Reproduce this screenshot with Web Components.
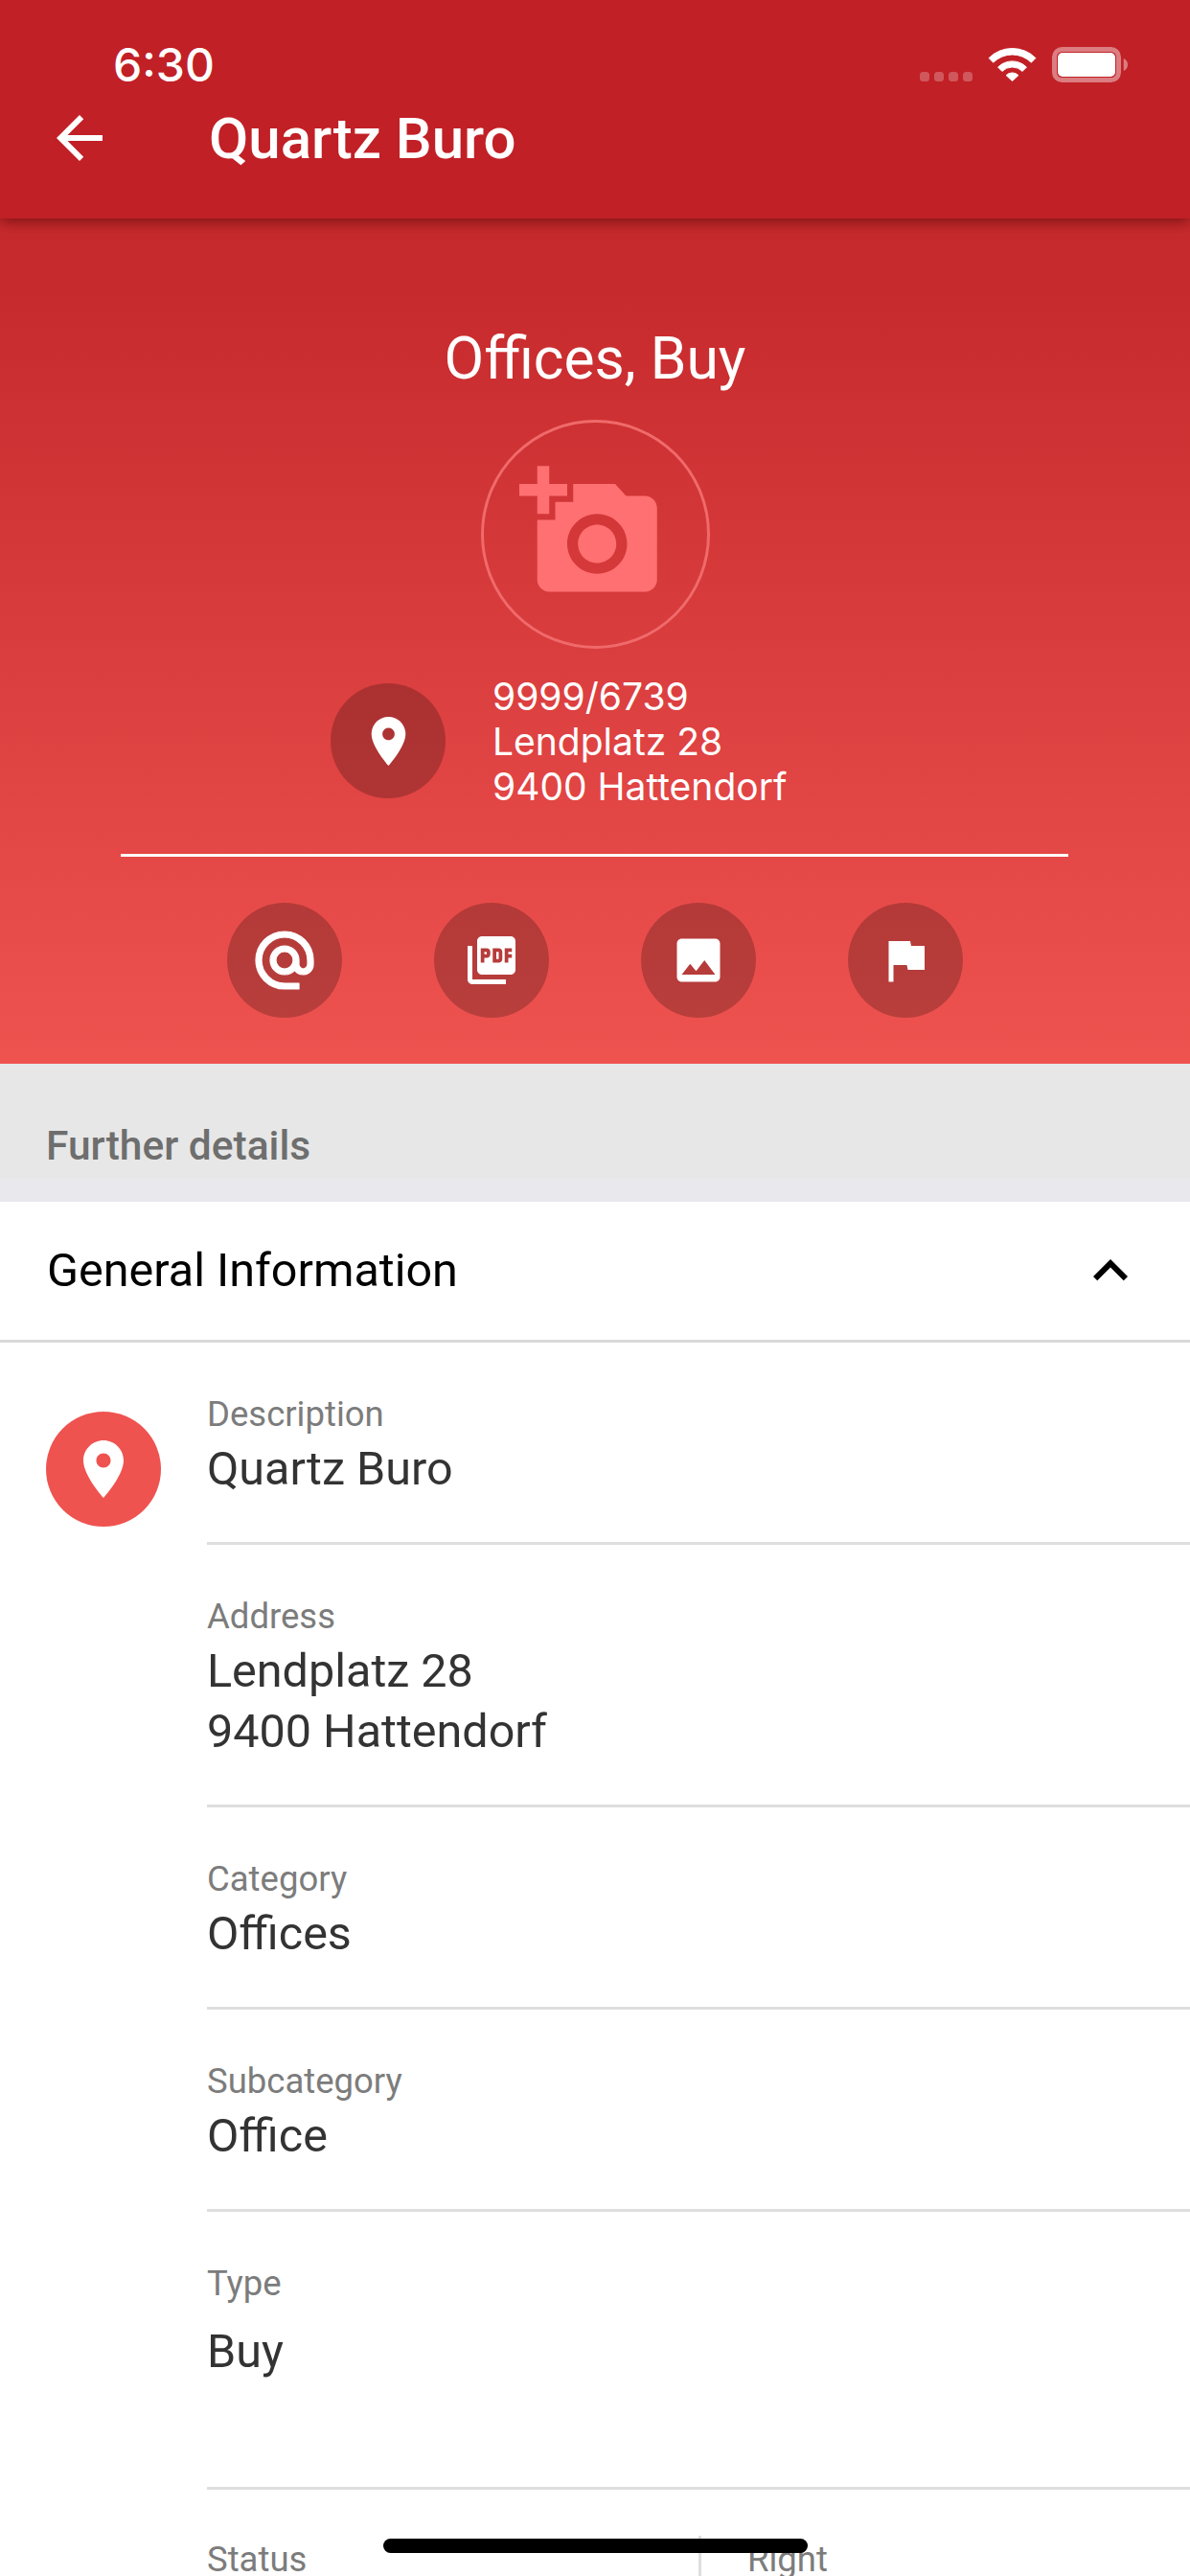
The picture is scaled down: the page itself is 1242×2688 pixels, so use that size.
<!DOCTYPE html>
<html>
<head>
<meta charset="utf-8">
<style>
html, body { margin: 0; padding: 0; background: #fff; }
body { width: 1242px; height: 2688px; overflow: hidden; position: relative; font-family: Roboto, "Liberation Sans", sans-serif; }
</style>
</head>
<body>
<app-header title="Quartz Buro" time="6:30"></app-header>
<hero-panel heading="Offices, Buy">
  <span>9999/6739</span>
  <span>Lendplatz 28</span>
  <span>9400 Hattendorf</span>
</hero-panel>
<details-band label="Further details"></details-band>
<section-head label="General Information"></section-head>
<detail-row label="Description" icon="place"><div>Quartz Buro</div></detail-row>
<detail-row label="Address"><div>Lendplatz 28</div><div>9400 Hattendorf</div></detail-row>
<detail-row label="Category"><div>Offices</div></detail-row>
<detail-row label="Subcategory"><div>Office</div></detail-row>
<detail-row label="Type" tall><div>Buy</div></detail-row>
<detail-pair first="Status" second="Right"></detail-pair>
<home-bar></home-bar>

<script>
const ICONS = {
	back: "M20 11H7.83l5.59-5.59L12 4l-8 8 8 8 1.41-1.41L7.83 13H20v-2z",
	place: "M12 2C8.13 2 5 5.13 5 9c0 5.25 7 13 7 13s7-7.75 7-13c0-3.87-3.13-7-7-7zm0 9.5c-1.38 0-2.5-1.12-2.5-2.5s1.12-2.5 2.5-2.5 2.5 1.12 2.5 2.5-1.12 2.5-2.5 2.5z",
	email: "M12 2C6.48 2 2 6.48 2 12s4.48 10 10 10h5v-2h-5c-4.34 0-8-3.66-8-8s3.66-8 8-8 8 3.66 8 8v1.43c0 .79-.71 1.57-1.5 1.57s-1.5-.78-1.5-1.57V12c0-2.76-2.24-5-5-5s-5 2.24-5 5 2.24 5 5 5c1.38 0 2.64-.56 3.54-1.47.65.89 1.77 1.47 2.96 1.47 1.97 0 3.5-1.6 3.5-3.57V12c0-5.52-4.48-10-10-10zm0 13c-1.66 0-3-1.34-3-3s1.34-3 3-3 3 1.34 3 3-1.34 3-3 3z",
	pdf: "M20 2H8c-1.1 0-2 .9-2 2v12c0 1.1.9 2 2 2h12c1.1 0 2-.9 2-2V4c0-1.1-.9-2-2-2zm-8.5 7.5c0 .83-.67 1.5-1.5 1.5H9v2H7.5V7H10c.83 0 1.5.67 1.5 1.5v1zm5 2c0 .83-.67 1.5-1.5 1.5h-2.5V7H15c.83 0 1.5.67 1.5 1.5v3zm4-3H19v1h1.5V11H19v2h-1.5V7h3v1.5zM9 9.5h1v-1H9v1zM4 6H2v14c0 1.1.9 2 2 2h14v-2H4V6zm10 5.5h1v-3h-1v3z",
	image: "M21 19V5c0-1.1-.9-2-2-2H5c-1.1 0-2 .9-2 2v14c0 1.1.9 2 2 2h14c1.1 0 2-.9 2-2zM8.5 13.5l2.5 3.01L14.5 12l4.5 6H5l3.5-4.5z",
	flag: "M14.4 6L14 4H5v17h2v-7h5.6l.4 2h7V6z",
	addPhoto: "M3 4V1h2v3h3v2H5v3H3V6H0V4h3zm3 6V7h3V4h7l1.83 2H21c1.1 0 2 .9 2 2v12c0 1.1-.9 2-2 2H5c-1.1 0-2-.9-2-2V10h3zm7 9c2.76 0 5-2.24 5-5s-2.24-5-5-5-5 2.24-5 5 2.24 5 5 5zm-3.2-5c0 1.77 1.43 3.2 3.2 3.2s3.2-1.43 3.2-3.2-1.43-3.2-3.2-3.2-3.2 1.43-3.2 3.2z",
	chevron: "M12 8l-6 6 1.41 1.41L12 10.83l4.59 4.58L18 14z",
};

const svgIcon = (name, size, fill = "#fff", bold = 0) =>
	`<svg width="${size}" height="${size}" viewBox="0 0 24 24" fill="${fill}"><path d="${ICONS[name]}"${bold ? ` stroke="${fill}" stroke-width="${bold}" stroke-linejoin="round"` : ""}/></svg>`;

class AppHeader extends HTMLElement {
	constructor() {
		super();
		this.attachShadow({ mode: "open" });
	}

	connectedCallback() {
		this.shadowRoot.innerHTML = `
      <style>
      :host {
        display: block;
        position: relative;
        z-index: 2;
        height: 228px;
        background: #c12026;
        color: #fff;
        box-shadow: 0 3px 14px rgba(70, 0, 0, 0.6);
      }
      .status {
        height: 72px;
        padding: 32px 65px 0 118px;
        display: flex;
        align-items: center;
        justify-content: space-between;
      }
      .time {
        font: 500 48px/72px Inter, Roboto, sans-serif;
      }
      .bar {
        height: 80px;
        display: flex;
        align-items: center;
        padding-left: 47px;
      }
      .bar svg { display: block; }
      .title {
        margin-left: 99px;
        padding-top: 1px;
        font: 500 60px/80px Roboto, sans-serif;
      }
      </style>
      <div class="status">
        <span class="time">${this.getAttribute("time")}</span>
        <svg width="217" height="37" viewBox="0 0 217 37" style="margin-top:-1px">
          <g fill="#fff" fill-opacity="0.25">
            <rect x="0" y="26" width="10" height="10" rx="3.5"/>
            <rect x="15" y="26" width="10" height="10" rx="3.5"/>
            <rect x="30" y="26" width="10" height="10" rx="3.5"/>
            <rect x="45" y="26" width="10" height="10" rx="3.5"/>
          </g>
          <g fill="#fff" stroke="#fff" stroke-width="1" stroke-linejoin="round">
            <path d="M72.100 11.600A34.500 34.500 0 0 1 120.900 11.600L116.300 16.200A28 28 0 0 0 76.700 16.200Z"/>
            <path d="M81.600 21.100A21 21 0 0 1 111.400 21.100L107.100 25.400A15 15 0 0 0 85.900 25.400Z"/>
            <path d="M90.100 29.600A9 9 0 0 1 102.900 29.600L96.500 35.500Z"/>
          </g>
          <rect x="140.500" y="2.500" width="67" height="32" rx="8" fill="none" stroke="#fff" stroke-opacity="0.42" stroke-width="5"/>
          <rect x="144" y="6" width="60" height="25" rx="5" fill="#fff"/>
          <path d="M212.700 12c2.600 1 4.300 3.500 4.300 6.500s-1.700 5.500-4.300 6.500z" fill="#fff" fill-opacity="0.42"/>
        </svg>
      </div>
      <div class="bar">
        ${svgIcon("back", 72)}
        <span class="title">${this.getAttribute("title")}</span>
      </div>
    `;
	}
}

class RoundIcon extends HTMLElement {
	constructor() {
		super();
		this.attachShadow({ mode: "open" });
	}

	connectedCallback() {
		const size = this.getAttribute("size") || 60;
		this.shadowRoot.innerHTML = `
      <style>
      :host {
        display: flex;
        width: 120px;
        height: 120px;
        flex: none;
        border-radius: 50%;
        align-items: center;
        justify-content: center;
        background: var(--round-bg, rgba(0, 0, 0, 0.22));
      }
      svg { display: block; }
      </style>
      ${svgIcon(this.getAttribute("name"), size, "#fff", this.getAttribute("bold") || 0)}
    `;
	}
}

class HeroPanel extends HTMLElement {
	constructor() {
		super();
		this.attachShadow({ mode: "open" });
	}

	connectedCallback() {
		this.shadowRoot.innerHTML = `
      <style>
      :host {
        display: block;
        height: 882px;
        box-sizing: border-box;
        padding-top: 112px;
        background: linear-gradient(#c72a2d 8%, #ef5350);
        color: #fff;
      }
      h1 {
        margin: 0;
        text-align: center;
        font: 400 60.5px/70px Roboto, sans-serif;
      }
      .photo {
        box-sizing: border-box;
        width: 239px;
        height: 239px;
        margin: 28px auto 0;
        border: 3px solid #f06a6b;
        border-radius: 50%;
        display: flex;
        align-items: center;
        justify-content: center;
      }
      .photo svg { display: block; margin: -6px 8px 0 0; }
      .info {
        display: flex;
        align-items: center;
        height: 120px;
        margin-top: 36px;
        padding-left: 345px;
        gap: 49px;
      }
      .lines {
        display: flex;
        flex-direction: column;
        font: 400 39px/47px Inter, Roboto, sans-serif;
      }
      hr {
        height: 3px;
        margin: 58px 127px 0 126px;
        border: 0;
        background: #fff;
      }
      .actions {
        display: flex;
        justify-content: center;
        gap: 96px;
        margin-top: 48px;
      }
      </style>
      <h1>${this.getAttribute("heading")}</h1>
      <div class="photo">${svgIcon("addPhoto", 150, "#ff7072")}</div>
      <div class="info">
        <round-icon name="place" size="61"></round-icon>
        <div class="lines"><slot></slot></div>
      </div>
      <hr>
      <div class="actions">
        <round-icon name="email" size="72" bold="0.4"></round-icon>
        <round-icon name="pdf"></round-icon>
        <round-icon name="image"></round-icon>
        <round-icon name="flag"></round-icon>
      </div>
    `;
	}
}

class DetailsBand extends HTMLElement {
	constructor() {
		super();
		this.attachShadow({ mode: "open" });
	}

	connectedCallback() {
		this.shadowRoot.innerHTML = `
      <style>
      :host {
        display: block;
        background: #e7e7e7;
        border-bottom: 24px solid #e8e8ed;
      }
      div {
        padding: 61px 0 9px 48px;
        font: 500 42.500px/50px Roboto, sans-serif;
        color: #6e6e6e;
      }
      </style>
      <div>${this.getAttribute("label")}</div>
    `;
	}
}

class SectionHead extends HTMLElement {
	constructor() {
		super();
		this.attachShadow({ mode: "open" });
	}

	connectedCallback() {
		this.shadowRoot.innerHTML = `
      <style>
      :host {
        display: flex;
        align-items: center;
        justify-content: space-between;
        box-sizing: border-box;
        height: 147px;
        padding: 0 49px;
        border-bottom: 3px solid #d9d9d9;
        font: 400 48.500px/60px Roboto, sans-serif;
        color: #000;
      }
      svg { display: block; margin-right: -2px; }
      </style>
      <span>${this.getAttribute("label")}</span>
      ${svgIcon("chevron", 72, "#000")}
    `;
	}
}

class DetailRow extends HTMLElement {
	constructor() {
		super();
		this.attachShadow({ mode: "open" });
	}

	connectedCallback() {
		const icon = this.getAttribute("icon");
		this.shadowRoot.innerHTML = `
      <style>
      :host {
        display: flex;
        --round-bg: #ef5350;
      }
      .lead {
        flex: none;
        width: 216px;
        box-sizing: border-box;
        padding: 72px 0 0 48px;
      }
      .body {
        flex: 1;
        padding: 50px 0 45px;
        border-bottom: 3px solid #dedede;
      }
      :host([tall]) .body { padding-bottom: 110px; }
      :host([tall]) .value { margin-top: 14px; }
      .label {
        font: 400 36.500px/50px Roboto, sans-serif;
        color: #7c7c7c;
      }
      .value {
        font: 400 48.500px/63px Roboto, sans-serif;
        color: #333;
      }
      </style>
      <div class="lead">${icon ? `<round-icon name="${icon}" size="72"></round-icon>` : ""}</div>
      <div class="body">
        <div class="label">${this.getAttribute("label")}</div>
        <div class="value"><slot></slot></div>
      </div>
    `;
	}
}

class DetailPair extends HTMLElement {
	constructor() {
		super();
		this.attachShadow({ mode: "open" });
	}

	connectedCallback() {
		this.shadowRoot.innerHTML = `
      <style>
      :host {
        display: flex;
        padding: 48px 0 0 216px;
        font: 400 36.500px/50px Roboto, sans-serif;
        color: #7c7c7c;
      }
      .first { width: 513px; flex: none; }
      .second {
        flex: 1;
        padding-left: 48px;
        border-left: 3px solid #dedede;
      }
      </style>
      <div class="first">${this.getAttribute("first")}</div>
      <div class="second">${this.getAttribute("second")}</div>
    `;
	}
}

class HomeBar extends HTMLElement {
	constructor() {
		super();
		this.attachShadow({ mode: "open" });
		this.shadowRoot.innerHTML = `
      <style>
      :host {
        display: block;
        position: absolute;
        left: 400px;
        top: 2649px;
        width: 443px;
        height: 15px;
        border-radius: 8px;
        background: #000;
        z-index: 3;
      }
      </style>
    `;
	}
}

customElements.define("round-icon", RoundIcon);
customElements.define("app-header", AppHeader);
customElements.define("hero-panel", HeroPanel);
customElements.define("details-band", DetailsBand);
customElements.define("section-head", SectionHead);
customElements.define("detail-row", DetailRow);
customElements.define("detail-pair", DetailPair);
customElements.define("home-bar", HomeBar);
</script>
</body>
</html>
